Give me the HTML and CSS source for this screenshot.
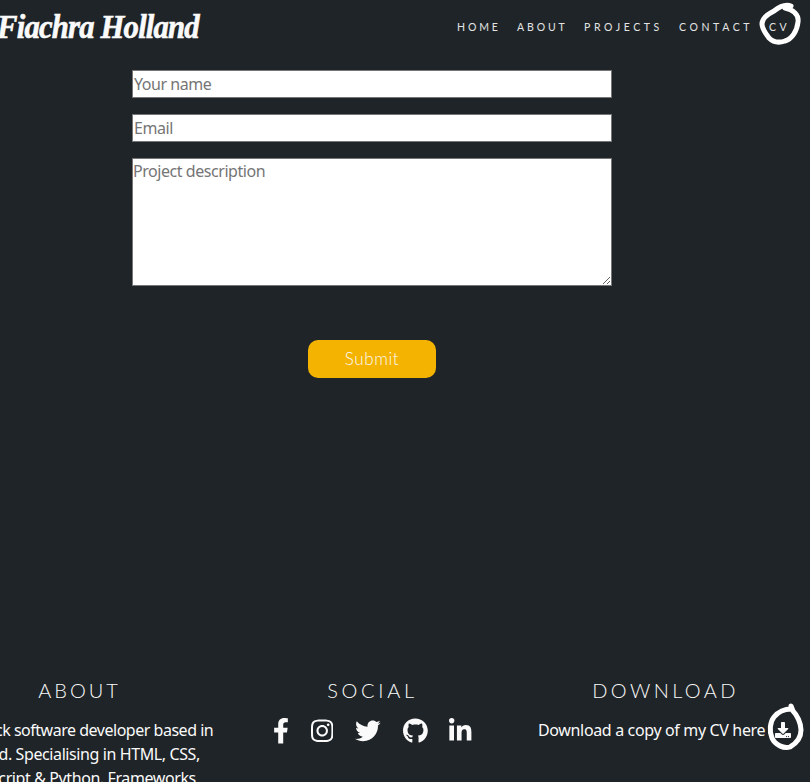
FILE: index.html
```html
<!DOCTYPE html>
<html lang="en">
<head>
<meta charset="utf-8">
<title>Fiachra Holland</title>
<link rel="stylesheet" href="styles.css">
</head>
<body>
<header class="header">
  <a class="logo">Fiachra Holland</a>
  <nav class="nav">
    <a class="home">HOME</a>
    <a class="about">ABOUT</a>
    <a class="projects">PROJECTS</a>
    <a class="contact">CONTACT</a>
    <a class="cv">CV
      <svg class="ring ring-nav" viewBox="0 0 54 50"><path d="M42 6C37 4 30 7 25 11C19 14 13 19 13 24C13 29 17 34 20 38C24 42 30 43 36 41C43 39 48 31 49 22C50 15 45 10 36 8"/></svg>
    </a>
  </nav>
</header>
<main class="page">
  <form class="form">
    <input class="field" type="text" placeholder="Your name">
    <input class="field" type="text" placeholder="Email">
    <textarea class="field area" placeholder="Project description"></textarea>
    <button class="submit" type="button">Submit</button>
  </form>
</main>
<footer class="footer">
  <section class="col">
    <h2 class="h-about">ABOUT</h2>
    <p><span class="line first">Full stack software developer based in</span><span class="line">Ireland. Specialising in HTML, CSS,</span><span class="line">JavaScript &amp; Python. Frameworks</span></p>
  </section>
  <section class="col">
    <h2 class="h-social">SOCIAL</h2>
    <div class="social">
      <svg viewBox="0 0 320 512"><path d="M279.14 288l14.22-92.66h-88.91v-60.13c0-25.35 12.42-50.06 52.24-50.06h40.42V6.26S260.43 0 225.36 0c-73.22 0-121.08 44.38-121.08 124.72v70.62H22.89V288h81.39v224h100.17V288z"/></svg>
      <svg viewBox="0 0 448 512"><path d="M224.1 141c-63.6 0-114.9 51.3-114.9 114.9s51.3 114.9 114.9 114.9S339 319.500 339 255.900 287.700 141 224.100 141zm0 189.600c-41.100 0-74.700-33.500-74.700-74.700s33.500-74.700 74.700-74.700 74.700 33.500 74.700 74.700-33.600 74.700-74.700 74.700zm146.400-194.300c0 14.900-12 26.800-26.800 26.800-14.900 0-26.800-12-26.800-26.800s12-26.800 26.800-26.800 26.800 12 26.800 26.800zm76.100 27.200c-1.700-35.900-9.900-67.700-36.200-93.900-26.200-26.200-58-34.400-93.900-36.200-37-2.100-147.900-2.100-184.900 0-35.800 1.700-67.600 9.900-93.900 36.100s-34.400 58-36.200 93.900c-2.100 37-2.100 147.900 0 184.900 1.700 35.900 9.900 67.700 36.200 93.900s58 34.400 93.900 36.200c37 2.100 147.900 2.100 184.900 0 35.900-1.700 67.700-9.900 93.900-36.200 26.200-26.200 34.400-58 36.200-93.900 2.100-37 2.100-147.800 0-184.800zM398.800 388c-7.800 19.600-22.900 34.700-42.600 42.600-29.500 11.700-99.500 9-132.100 9s-102.700 2.600-132.100-9c-19.600-7.800-34.700-22.900-42.600-42.600-11.700-29.500-9-99.500-9-132.100s-2.600-102.700 9-132.100c7.800-19.600 22.900-34.700 42.600-42.600 29.500-11.700 99.500-9 132.100-9s102.700-2.600 132.100 9c19.600 7.800 34.700 22.900 42.600 42.600 11.700 29.500 9 99.500 9 132.100s2.700 102.700-9 132.100z"/></svg>
      <svg viewBox="0 0 512 512"><path d="M459.370 151.716c.325 4.548.325 9.097.325 13.645 0 138.720-105.583 298.558-298.558 298.558-59.452 0-114.680-17.219-161.137-47.106 8.447.974 16.568 1.299 25.340 1.299 49.055 0 94.213-16.568 130.274-44.832-46.132-.975-84.792-31.188-98.112-72.772 6.498.974 12.995 1.624 19.818 1.624 9.421 0 18.843-1.300 27.614-3.573-48.081-9.747-84.143-51.980-84.143-102.985v-1.299c13.969 7.797 30.214 12.670 47.431 13.319-28.264-18.843-46.781-51.005-46.781-87.391 0-19.492 5.197-37.360 14.294-52.954 51.655 63.675 129.300 105.258 216.365 109.807-1.624-7.797-2.599-15.918-2.599-24.040 0-57.828 46.782-104.934 104.934-104.934 30.213 0 57.502 12.670 76.670 33.137 23.715-4.548 46.456-13.320 66.599-25.340-7.798 24.366-24.366 44.833-46.132 57.827 21.117-2.273 41.584-8.122 60.426-16.243-14.292 20.791-32.161 39.308-52.628 54.253z"/></svg>
      <svg viewBox="0 0 496 512"><path d="M165.900 397.400c0 2-2.300 3.600-5.200 3.600-3.300.3-5.600-1.300-5.600-3.600 0-2 2.300-3.600 5.200-3.600 3-.3 5.600 1.300 5.600 3.600zM244.800 8C106.100 8 0 113.300 0 252c0 110.900 69.800 205.800 169.500 239.200 12.800 2.300 17.300-5.600 17.300-12.100 0-6.200-.3-40.400-.3-61.400 0 0-70 15-84.700-29.800 0 0-11.400-29.100-27.800-36.600 0 0-22.900-15.700 1.600-15.400 0 0 24.900 2 38.600 25.800 21.900 38.600 58.600 27.500 72.900 20.900 2.300-16 8.800-27.100 16-33.700-55.900-6.200-112.300-14.300-112.300-110.500 0-27.500 7.600-41.300 23.600-58.900-2.600-6.500-11.100-33.300 2.600-67.900 20.900-6.500 69 27 69 27 20-5.600 41.500-8.500 62.800-8.500s42.800 2.900 62.800 8.500c0 0 48.100-33.600 69-27 13.700 34.700 5.200 61.400 2.600 67.900 16 17.700 25.800 31.500 25.800 58.900 0 96.500-58.900 104.200-114.800 110.500 9.200 7.900 17 22.900 17 46.400 0 33.700-.3 75.400-.3 83.600 0 6.500 4.600 14.400 17.300 12.100C428.200 457.800 496 362.900 496 252 496 113.300 383.500 8 244.800 8z"/></svg>
      <svg viewBox="0 0 448 512"><path d="M100.280 448H7.400V148.900h92.880zM53.790 108.100C24.090 108.100 0 83.500 0 53.800a53.790 53.790 0 0 1 107.580 0c0 29.700-24.100 54.300-53.790 54.300zM447.900 448h-92.680V302.400c0-34.700-.7-79.200-48.290-79.200-48.290 0-55.690 37.700-55.690 76.700V448h-92.780V148.900h89.080v40.800h1.300c12.400-23.500 42.690-48.300 87.880-48.300 94 0 111.280 61.900 111.280 142.300V448z"/></svg>
    </div>
  </section>
  <section class="col">
    <h2 class="h-download">DOWNLOAD</h2>
    <div class="download">
      <span class="dl-text">Download a copy of my CV here</span>
      <span class="dl-icon">
        <svg class="dl-svg" viewBox="0 0 512 512"><path d="M216 0h80c13.300 0 24 10.700 24 24v168h87.700c17.800 0 26.700 21.500 14.100 34.100L269.700 378.300c-7.500 7.500-19.800 7.500-27.300 0L90.100 226.100c-12.600-12.600-3.700-34.100 14.100-34.100H192V24c0-13.300 10.700-24 24-24zm296 376v112c0 13.300-10.700 24-24 24H24c-13.300 0-24-10.700-24-24V376c0-13.300 10.700-24 24-24h146.700l49 49c20.100 20.100 52.500 20.100 72.600 0l49-49H488c13.300 0 24 10.700 24 24zm-124 88c0-11-9-20-20-20s-20 9-20 20 9 20 20 20 20-9 20-20zm64 0c0-11-9-20-20-20s-20 9-20 20 9 20 20 20 20-9 20-20z"/></svg>
        <svg class="ring ring-dl" viewBox="0 0 42 52"><path d="M26 6L28 11C32 15 36 23 36 30C36 37 32 43 25 47C19 49 10 45 7 38C4 31 5 22 9 17C13 12 20 9 26 9Z"/></svg>
      </span>
    </div>
  </section>
</footer>
</body>
</html>
```
FILE: styles.css
```css
* { box-sizing: border-box; }
body {
  margin: 0;
  height: 782px;
  overflow: hidden;
  display: flex;
  flex-direction: column;
  background: #1f2428;
  color: #fafafa;
  font-family: "Noto Sans", sans-serif;
  font-size: 16px;
}
.header {
  height: 54px;
  flex: none;
  display: flex;
  justify-content: space-between;
  align-items: center;
}
.logo {
  margin-left: -3px;
  font: italic bold 33px/54px "Liberation Serif", serif;
  letter-spacing: -0.9px;
  white-space: nowrap;
  transform: scaleX(0.932);
  transform-origin: 0 50%;
  -webkit-text-stroke: 0.6px #fafafa;
}
.nav {
  display: flex;
  width: 353px;
  font: 400 10.5px/52px Lato, sans-serif;
  letter-spacing: 3.6px;
  color: #e4e4e4;
}
.nav a { white-space: nowrap; }
.nav .home { width: 60px; letter-spacing: 2.9px; }
.nav .about { width: 67px; letter-spacing: 2.9px; }
.projects { width: 95px; }
.contact { width: 90px; }
.cv { position: relative; }
.ring {
  position: absolute;
  fill: none;
  stroke: #fff;
  stroke-width: 5;
  stroke-linecap: round;
  stroke-linejoin: round;
}
.ring-nav { left: -20px; top: -1px; width: 54px; height: 50px; }
.page { flex: none; height: 624px; padding: 16px 0 0 132px; }
.form { width: 480px; display: flex; flex-direction: column; }
.field {
  height: 28px;
  margin: 0 0 16px;
  padding: 1px;
  border: 1px solid #767676;
  background: #fff;
  font: 16px/24px "Noto Sans", sans-serif;
  letter-spacing: -0.45px;
}
.field::placeholder { color: #757575; }
.area { height: 128px; padding: 0; margin-bottom: 54px; }
.submit {
  align-self: center;
  width: 128px;
  height: 38px;
  padding: 0 0 1px;
  border: 0;
  border-radius: 10px;
  background: #f5b301;
  color: #fafafa;
  font: 300 17px/37px Lato, sans-serif;
  letter-spacing: 0.6px;
}
.footer {
  flex: none;
  width: 879px;
  margin-left: -67px;
  display: grid;
  grid-template-columns: repeat(3, 293px);
}
.col { height: 110px; text-align: center; }
h2 {
  margin: 0 0 16px;
  font: 300 20px/24px Lato, sans-serif;
  letter-spacing: 3.4px;
}
.h-about { letter-spacing: 3px; }
.h-social { letter-spacing: 3.7px; }
p { margin: 0 2px 0 0; line-height: 24px; letter-spacing: -0.4px; }
.line { display: block; white-space: nowrap; }
.first { letter-spacing: -0.48px; margin-right: -2px; }
.social { display: flex; justify-content: center; gap: 21.9px; }
.social svg { height: 25.6px; fill: #fafafa; }
.download { display: flex; padding-left: 19px; line-height: 24px; white-space: nowrap; }
.dl-text { letter-spacing: -0.35px; }
.dl-icon { position: relative; display: flex; margin-left: 10px; padding-top: 4px; }
.dl-svg { width: 16px; height: 16px; fill: #fafafa; }
.ring-dl { left: -10px; top: -18px; width: 42px; height: 52px; }
```
